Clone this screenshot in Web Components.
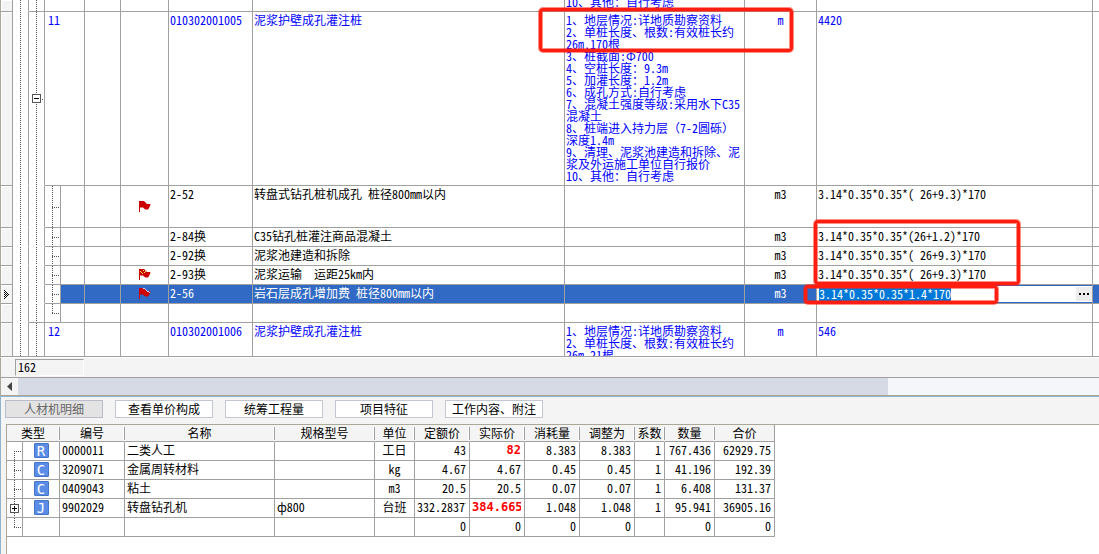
<!DOCTYPE html>
<html lang="zh-CN">
<head>
<meta charset="utf-8">
<title>工程量清单</title>
<style>
  html, body { margin: 0; height: 100%; }
  body {
    font: 12px/12px "Noto Sans Mono CJK SC", "Noto Sans CJK SC", monospace;
    color: #000; background: #fff; overflow: hidden;
    --line: #a0a0a0; --tan: #aca899; --panel: #f4f4f4; --pick: #316ac5; --edge: #8fb4cc;
  }
</style>
</head>
<body>
<bill-app></bill-app>
<script>
const define = (name, html, setup) => customElements.define(name, class extends HTMLElement {
  constructor() {
    super();
    const t = document.createElement('template');
    t.innerHTML = html;
    this.attachShadow({ mode: 'open' }).append(t.content.cloneNode(true));
  }
  connectedCallback() { if (setup) setup(this, this.shadowRoot); }
});

const tableCss = `
  *, *::before, *::after { box-sizing: border-box; }
  table { table-layout: fixed; border-collapse: separate; border-spacing: 0; }
  td, th { padding: 0; font-weight: normal; position: relative;
    border-right: 1px solid var(--line); border-bottom: 1px solid var(--line); white-space: pre; }
  .tree::before { content: ""; position: absolute; left: 7px; top: 0; bottom: 0; width: 1px;
    background: repeating-linear-gradient(#555 0 1px, transparent 1px 2px); }
  .stub::after { content: ""; position: absolute; left: 7px; right: 0; top: 50%; height: 1px;
    background: repeating-linear-gradient(to right, #555 0 1px, transparent 1px 2px); }
  .end::before { bottom: 50%; }
  .begin::before { top: 50%; }
`;

define('tree-toggle', `<style>
  :host { display: block; position: relative; z-index: 1; width: 9px; height: 9px; margin-left: 3px; }
  button { display: block; width: 9px; height: 9px; padding: 0; border: 1px solid #555; background: #fff; }
  svg { display: block; }
  :host([open]) .v { display: none; }
</style><button aria-label="展开或折叠"><svg width="7" height="7" shape-rendering="crispEdges"><path d="M1 3h5v1H1z"/><path class="v" d="M3 1h1v5H3z"/></svg></button>`);

define('flag-icon', `<style>
  :host { display: block; width: 12px; margin: 0 auto; }
  svg { display: block; }
  .spark, .rim { display: none; }
  :host([kind=spark]) .spark, :host([kind=rim]) .rim { display: block; }
</style><svg width="12" height="12" viewBox="0 0 12 12">
  <path d="M1 0h4l1 1 1 1 1 1h3l.5 1-.5 1-1 2-1 1.500H6.500L5 7.500 4 6.500H1V11H0V0z" fill="#c00"/>
  <path class="rim" d="M4 0h2v1H4zM6 1h1v1H6zM7 2h1v1H7zM8 3h2v1H8zM10 4h1v1H10z" fill="#c9d6ee" shape-rendering="crispEdges"/>
  <path class="spark" d="M1 2h1v1H1zM3 4h1v1H3zM5 3h1v1H5zM4 1h1v1H4zM2 3h1v1H2zM6 2h1v1H6z" fill="#ffe81c" shape-rendering="crispEdges"/>
</svg>`);

define('mark-box', `<style>
  :host { display: block; position: absolute; z-index: 5; box-sizing: border-box; pointer-events: none;
    border: 3px solid #ff1e10; border-radius: 4px;
    box-shadow: 0 0 0 1px #ff1e1080, inset 0 0 0 1px #ff1e1080; }
  :host([kind=features]) { left: -26px; top: -4px; width: 254px; height: 44px; }
  :host([kind=formulas]) { left: -3px; top: -8px; width: 206px; height: 65px; }
  :host([kind=editor]) { left: -13px; top: 0; width: 194px; height: 19px; }
</style>`);

define('formula-editor', `<style>
  :host { display: flex; height: 18px; box-sizing: border-box; background: #fff;
    border: solid var(--pick); border-width: 1px 0; padding-left: 2px; align-items: center; }
  input { box-sizing: border-box; font: inherit; width: 22ch; height: 14px; padding: 0 0 2px; border: 0; outline: 0; background: #0078d7; color: #fff; }
  button { margin-left: auto; width: 16px; height: 14px; padding: 0; border: 0; background: #ececec; display: grid; place-items: center; }
</style><input aria-label="工程量表达式" value="3.14*0.35*0.35*1.4*170"><button aria-label="更多"><svg width="10" height="2"><path d="M0 0h2v2H0zM4 0h2v2H4zM8 0h2v2H8z"/></svg></button>`);

const FEATURES = [
  '1、地层情况:详地质勘察资料', '2、单桩长度、根数:有效桩长约', '26m,170根', '3、桩截面:Ф700',
  '4、空桩长度：9.3m', '5、加灌长度：1.2m', '6、成孔方式:自行考虑', '7、混凝土强度等级:采用水下C35',
  '混凝土', '8、桩端进入持力层（7-2圆砾）', '深度1.4m', '9、清理、泥浆池建造和拆除、泥', '浆及外运施工单位自行报价', '10、其他：自行考虑'];
const ROWS = [
  { h: 'clip-top', parent: 1, text: ['10、其他：自行考虑'] },
  { h: 'tall', parent: 1, no: '11', open: 1, code: '010302001005', name: '泥浆护壁成孔灌注桩', text: FEATURES, unit: 'm', qty: '4420', mark: 'features' },
  { h: 'mid', code: '2-52', name: '转盘式钻孔桩机成孔 桩径800mm以内', unit: 'm3', qty: '3.14*0.35*0.35*( 26+9.3)*170', flag: 'plain' },
  { code: '2-84换', name: 'C35钻孔桩灌注商品混凝土', unit: 'm3', qty: '3.14*0.35*0.35*(26+1.2)*170', qmark: 'formulas' },
  { code: '2-92换', name: '泥浆池建造和拆除', unit: 'm3', qty: '3.14*0.35*0.35*( 26+9.3)*170' },
  { code: '2-93换', name: '泥浆运输  运距25km内', unit: 'm3', qty: '3.14*0.35*0.35*( 26+9.3)*170', flag: 'spark' },
  { pick: 1, code: '2-56', name: '岩石层成孔增加费 桩径800mm以内', unit: 'm3', edit: 1, flag: 'rim', qmark: 'editor' },
  { last: 1 },
  { h: 'cut', parent: 1, no: '12', code: '010302001006', name: '泥浆护壁成孔灌注桩', text: ['1、地层情况:详地质勘察资料', '2、单桩长度、根数:有效桩长约', '26m,21根'], unit: 'm', qty: '546' },
];

define('bill-grid', `<style>${tableCss}
  :host { display: block; border-left: 1px solid var(--tan); background: #fff; }
  table { width: 100%; }
  tr { height: 19px; } .clip-top { height: 12px; } .tall { height: 174px; } .mid { height: 42px; } .cut { height: 34px; }
  td { vertical-align: top; padding: 2px 0 0 1px; }
  .parent { color: #00f; }
  .gut { background: var(--panel); box-shadow: inset 1px 1px #fff; padding: 0; vertical-align: middle; }
  .gut svg { display: block; margin: 0 auto; }
  .rail { border-bottom-color: transparent; padding: 0; vertical-align: middle; }
  .rail.shut, tr:last-child .rail { border-bottom-color: var(--line); }
  .no { padding-left: 3px; }
  .unit { text-align: center; padding-left: 0; }
  .flag { vertical-align: middle; padding: 0; }
  .end-col { border-right: 0; }
  .edit { padding: 0; }
  .pick td.f { background: var(--pick); color: #fff; }
  .clip-top .text, .cut .text, .clip-top td { padding: 0 0 0 1px; }
  .clip-top .lines { height: 11px; overflow: hidden; display: flex; align-items: end; padding-bottom: 3px; }
  .cut .lines { height: 33px; overflow: hidden; padding-top: 2px; }
</style>
<table aria-label="工程量清单"><colgroup><col style="width:12px"><col style="width:16px"><col style="width:16px"><col style="width:16px"><col style="width:24px"><col style="width:36px"><col style="width:48px"><col style="width:84px"><col><col style="width:180px"><col style="width:72px"><col style="width:276px"><col style="width:6px"></colgroup><tbody></tbody></table>`,
(el, root) => {
  root.querySelector('tbody').innerHTML = ROWS.map((r, i) => {
    const shut = r.last || i === 0 ? 'shut' : '';
    return `<tr class="${r.h || ''} ${r.parent ? 'parent' : ''} ${r.pick ? 'pick' : ''}">
<td class="gut">${r.pick ? '<svg width="6" height="9" shape-rendering="crispEdges"><path d="M0 0h1v1H0zM1 1h1v1H1zM2 2h1v1H2zM3 3h1v1H3zM4 4h1v1H4zM3 5h1v1H3zM2 6h1v1H2zM1 7h1v1H1zM0 8h1v1H0zM0 2h1v1H0zM0 4h1v1H0zM0 6h1v1H0zM1 3h1v1H1zM1 5h1v1H1zM2 4h1v1H2z"/></svg>' : ''}</td>
<td class="rail tree"></td><td class="rail tree ${shut} ${r.open ? 'stub' : ''}">${r.open ? '<tree-toggle open></tree-toggle>' : ''}</td>
${r.parent ? `<td class="no" colspan="2">${r.no || ''}</td>` : `<td class="tree stub ${r.last ? 'end' : ''}"></td><td class="f"></td>`}<td class="f"></td>
<td class="f flag">${r.flag ? `<flag-icon kind="${r.flag}"></flag-icon>` : ''}</td>
<td class="f">${r.code || ''}</td><td class="f">${r.name || ''}</td>
<td class="f text"><div class="lines">${(r.text || []).join('<br>')}</div>${r.mark ? `<mark-box kind="${r.mark}"></mark-box>` : ''}</td>
<td class="f unit">${r.unit || ''}</td>
<td class="f ${r.edit ? 'edit' : ''}">${r.edit ? '<formula-editor></formula-editor>' : r.qty || ''}${r.qmark ? `<mark-box kind="${r.qmark}"></mark-box>` : ''}</td>
<td class="f end-col"></td></tr>`;
  }).join('');
});

define('count-bar', `<style>
  :host { display: flex; box-sizing: border-box; height: 21px; padding: 1px 0 2px 14px; background: var(--panel);
    border: solid; border-width: 1px 0 1px 1px; border-color: #fff transparent var(--line) var(--tan); }
  input { box-sizing: border-box; width: 69px; height: 17px; padding: 0 2px 2px; font: inherit; background: transparent; outline: 0;
    border: 1px solid; border-color: var(--line) #fff #fff var(--line); }
</style><input aria-label="行数" value="162" readonly>`);

define('scroll-strip', `<style>
  :host { display: flex; height: 17px; background: #f4f6fa; border-left: 1px solid var(--tan); border-bottom: 1px solid var(--tan); }
  button { width: 17px; padding: 0; border: 0; background: var(--panel); display: grid; place-items: center; }
  div { width: calc(81% - 19px); background: #d6dae4; }
</style><button aria-label="向左滚动"><svg width="5" height="9"><path d="M5 0v9L0 4.500z" fill="#444"/></svg></button><div></div>`);

define('pane-tab', `<style>
  :host { display: block; width: 98px; }
  button { display: block; box-sizing: border-box; width: 100%; height: 18px; padding: 0; font: inherit; color: #000;
    background: #fff; border: 1px solid #c3c7d4; white-space: nowrap; }
  :host([active]) button { background: #e3e3e3; color: #666; border-color: #b8bccb; }
</style><button><slot></slot></button>`);

define('type-badge', `<style>
  :host { display: block; box-sizing: border-box; width: 15px; height: 15px; margin: 0 auto; border: 1px solid #4573c8; border-radius: 1px;
    background: #5b8ce6; color: #fff; text-align: center; font: 14px/14px "DejaVu Sans Mono", monospace; }
</style><slot></slot>`);

const ITEMS = [
  ['R', '0000011', '二类人工', '', '工日', '43', '82', '8.383', '8.383', '1', '767.436', '62929.75'],
  ['C', '3209071', '金属周转材料', '', 'kg', '4.67', '4.67', '0.45', '0.45', '1', '41.196', '192.39'],
  ['C', '0409043', '粘土', '', 'm3', '20.5', '20.5', '0.07', '0.07', '1', '6.408', '131.37'],
  ['J', '9902029', '转盘钻孔机', 'ф800', '台班', '332.28377', '384.6654', '1.048', '1.048', '1', '95.941', '36905.16'],
  ['', '', '', '', '', '0', '0', '0', '0', '', '0', '0'],
];
define('resource-table', `<style>${tableCss}
  :host { display: block; flex: 1; background: #fff; border-top: 1px solid var(--tan); border-left: 1px solid var(--tan); }
  table { width: 768px; }
  tr { height: 19px; } thead tr { height: 17px; }
  th { background: var(--panel); border-right-color: transparent; }
  th::after { content: ""; position: absolute; right: -1px; top: 2px; bottom: 1px; width: 2px; background: linear-gradient(to right, #fff 50%, var(--line) 50%); }
  th:last-child { border-right-color: var(--line); } th:last-child::after { display: none; }
  td { vertical-align: middle; padding: 0 0 2px 2px; }
  .rail { padding: 0; }
  .mid { text-align: center; padding-left: 0; }
  .num { padding-right: 3px; text-align: right; }
  .long { overflow: hidden; text-align: left; }
  .hot { color: red; font: bold 12px/12px "DejaVu Sans Mono", monospace; }
</style><table aria-label="人材机明细"><colgroup></colgroup><thead><tr></tr></thead><tbody></tbody></table>`,
(el, root) => {
  const q = s => root.querySelector(s);
  q('colgroup').innerHTML = [16, 37, 65, 150, 100, 40, 55, 55, 55, 55, 30, 50, 60].map(w => `<col style="width:${w}px">`).join('');
  q('thead tr').innerHTML = ['类型', '编号', '名称', '规格型号', '单位', '定额价', '实际价', '消耗量', '调整为', '系数', '数量', '合价']
    .map((t, i) => `<th scope="col"${i ? '' : ' colspan="2"'}>${t}</th>`).join('');
  q('tbody').innerHTML = ITEMS.map((r, n) => `<tr><td class="rail tree stub ${n === 0 ? 'begin' : n === 4 ? 'end' : ''}">${n === 3 ? '<tree-toggle></tree-toggle>' : ''}</td>` +
    r.map((t, i) => i === 0 ? `<td class="mid">${t ? `<type-badge>${t}</type-badge>` : ''}</td>`
      : i === 4 ? `<td class="mid">${t}</td>`
      : i > 4 ? `<td class="num ${i === 6 && (n === 0 || n === 3) ? 'hot' : ''}"><div class="${t.length > 7 && i < 7 ? 'long' : ''}">${t}</div></td>`
      : `<td>${t}</td>`).join('') + '</tr>').join('');
});

define('detail-pane', `<style>
  :host { display: flex; flex-direction: column; flex: 1; background: var(--panel); border-top: 1px solid var(--edge); border-left: 1px solid var(--edge); }
  nav { display: flex; gap: 12px; padding: 3px 4px 6px; }
  resource-table { margin-left: 5px; }
</style><nav><pane-tab active>人材机明细</pane-tab><pane-tab>查看单价构成</pane-tab><pane-tab>统筹工程量</pane-tab><pane-tab>项目特征</pane-tab><pane-tab>工作内容、附注</pane-tab></nav><resource-table></resource-table>`);

define('bill-app', `<style>
  :host { display: flex; flex-direction: column; min-height: 100vh; }
</style><bill-grid></bill-grid><count-bar></count-bar><scroll-strip></scroll-strip><detail-pane></detail-pane>`);
</script>
</body>
</html>
